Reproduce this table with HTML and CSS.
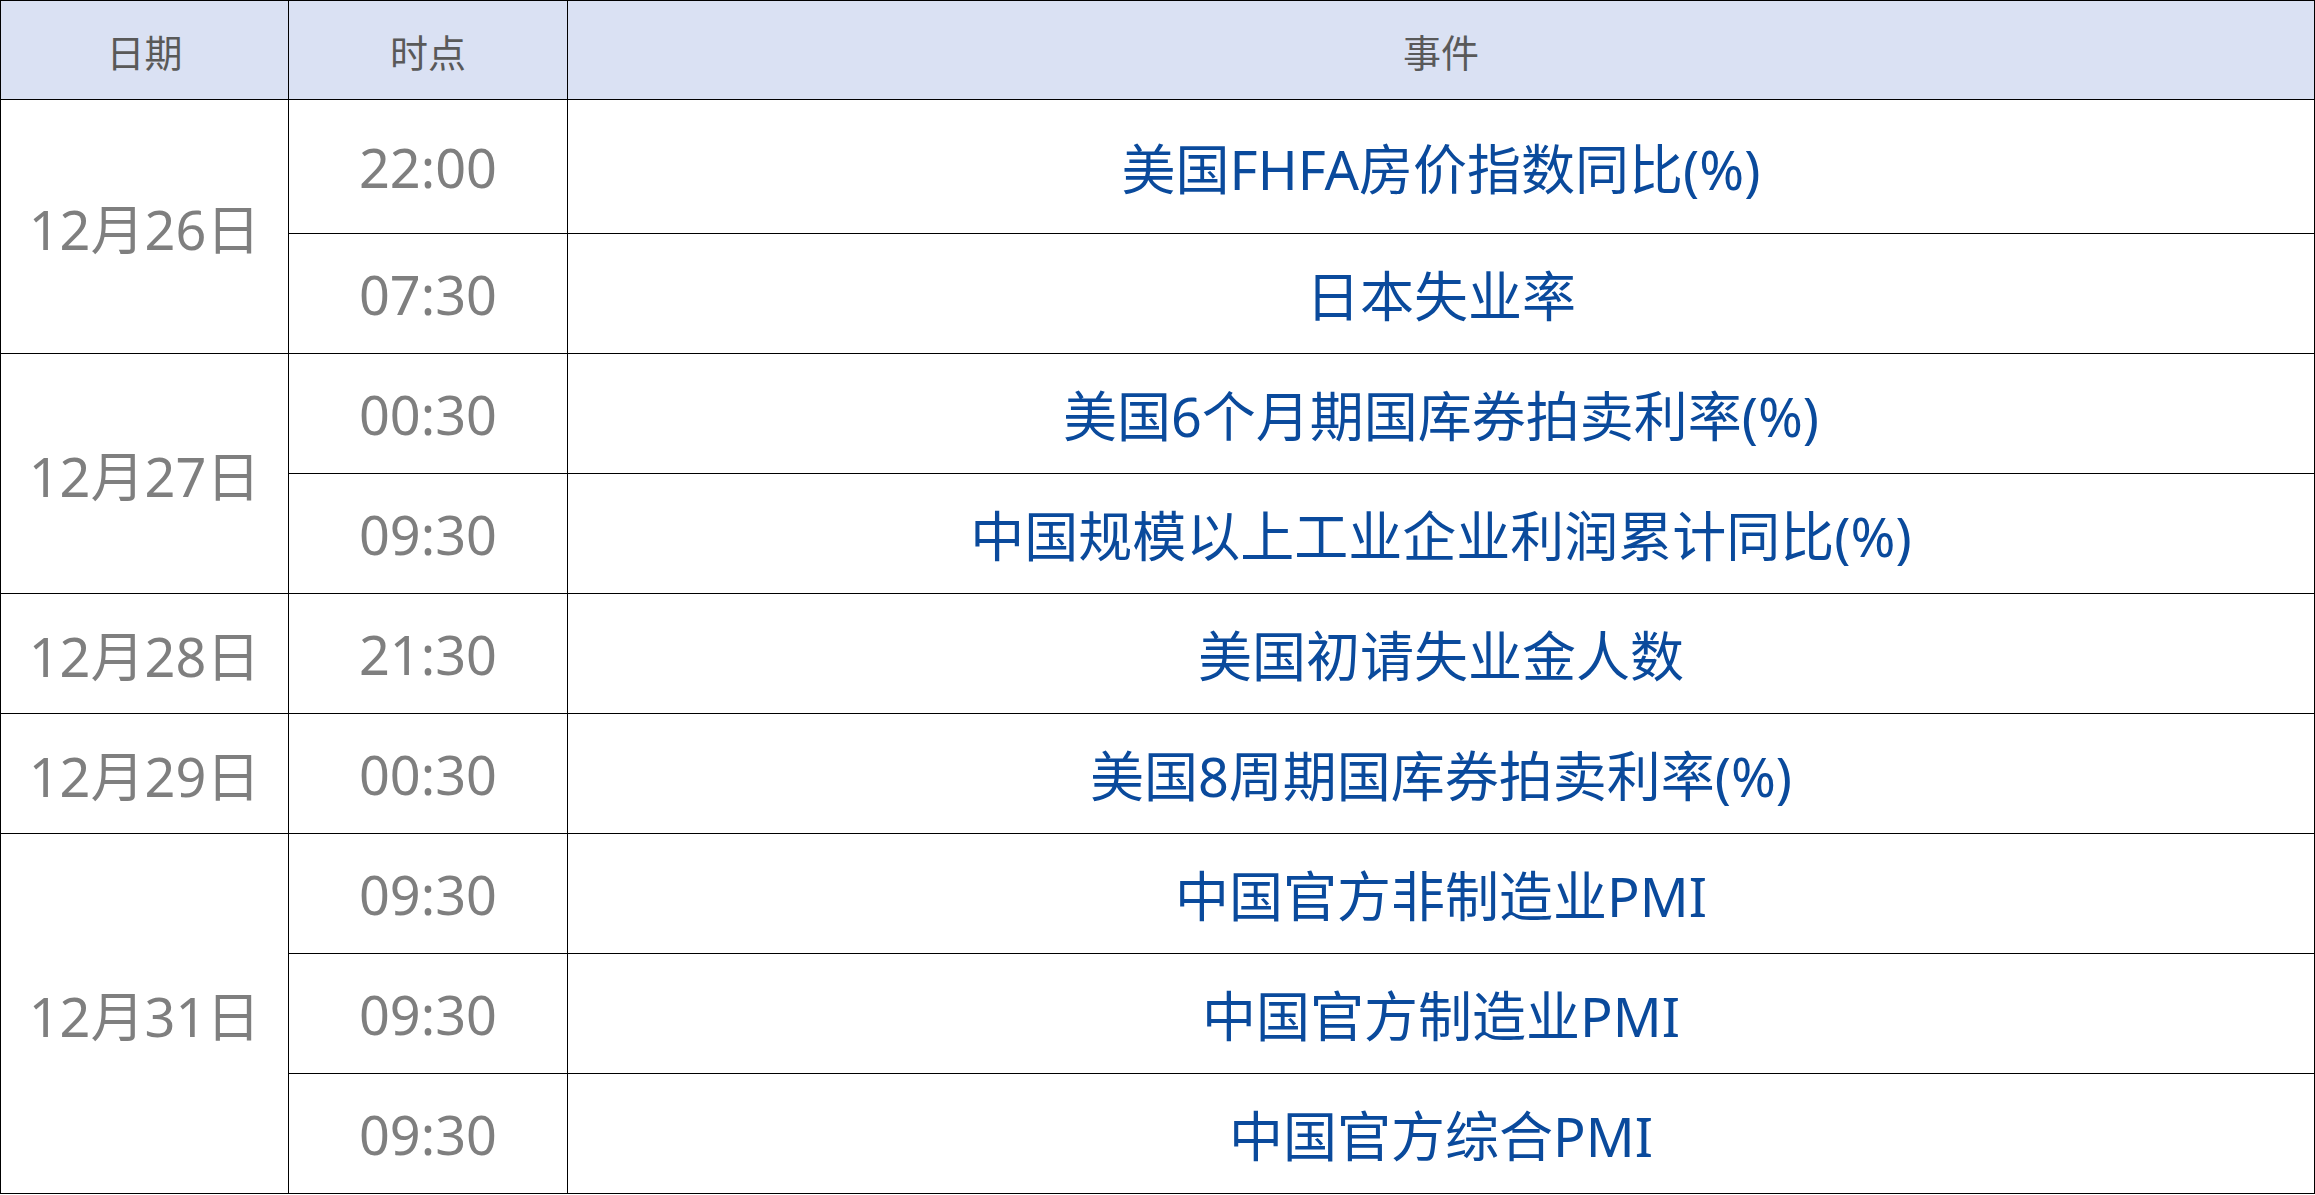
FILE: index.html
```html
<!DOCTYPE html>
<html lang="zh-CN">
<head>
<meta charset="utf-8">
<title>财经日历</title>
<link rel="stylesheet" href="styles.css">
</head>
<body>
<table class="cal">
  <colgroup>
    <col class="c-date">
    <col class="c-time">
    <col class="c-event">
  </colgroup>
  <thead>
    <tr class="head">
      <th>日期</th>
      <th>时点</th>
      <th>事件</th>
    </tr>
  </thead>
  <tbody>
    <tr class="r-tall">
      <td class="date" rowspan="2">12月26日</td>
      <td class="time">22:00</td>
      <td class="event">美国FHFA房价指数同比(%)</td>
    </tr>
    <tr>
      <td class="time">07:30</td>
      <td class="event">日本失业率</td>
    </tr>
    <tr>
      <td class="date" rowspan="2">12月27日</td>
      <td class="time">00:30</td>
      <td class="event">美国6个月期国库券拍卖利率(%)</td>
    </tr>
    <tr>
      <td class="time">09:30</td>
      <td class="event">中国规模以上工业企业利润累计同比(%)</td>
    </tr>
    <tr>
      <td class="date">12月28日</td>
      <td class="time">21:30</td>
      <td class="event">美国初请失业金人数</td>
    </tr>
    <tr>
      <td class="date">12月29日</td>
      <td class="time">00:30</td>
      <td class="event">美国8周期国库券拍卖利率(%)</td>
    </tr>
    <tr>
      <td class="date" rowspan="3">12月31日</td>
      <td class="time">09:30</td>
      <td class="event">中国官方非制造业PMI</td>
    </tr>
    <tr>
      <td class="time">09:30</td>
      <td class="event">中国官方制造业PMI</td>
    </tr>
    <tr>
      <td class="time">09:30</td>
      <td class="event">中国官方综合PMI</td>
    </tr>
  </tbody>
</table>
</body>
</html>
```

FILE: styles.css
```css
html, body {
  margin: 0;
  padding: 0;
  background: #ffffff;
}

.cal {
  width: 2314px;
  border-collapse: collapse;
  table-layout: fixed;
  font-family: "Noto Sans", "Noto Sans CJK SC", sans-serif;
}

.c-date { width: 288px; }
.c-time { width: 279px; }
.c-event { width: 1747px; }

.cal th,
.cal td {
  border: 1.5px solid #000000;
  padding: 0;
  text-align: center;
  vertical-align: middle;
}

.head {
  height: 99px;
}

.head th {
  background: #dae1f3;
  color: #595959;
  font-weight: normal;
  font-size: 38px;
}

.cal tbody tr {
  height: 120px;
}

.cal tbody tr.r-tall {
  height: 134px;
}

.date,
.time {
  color: #7f7f7f;
  font-size: 54px;
}

.event {
  color: #0a4a9c;
  font-size: 54px;
}
```
